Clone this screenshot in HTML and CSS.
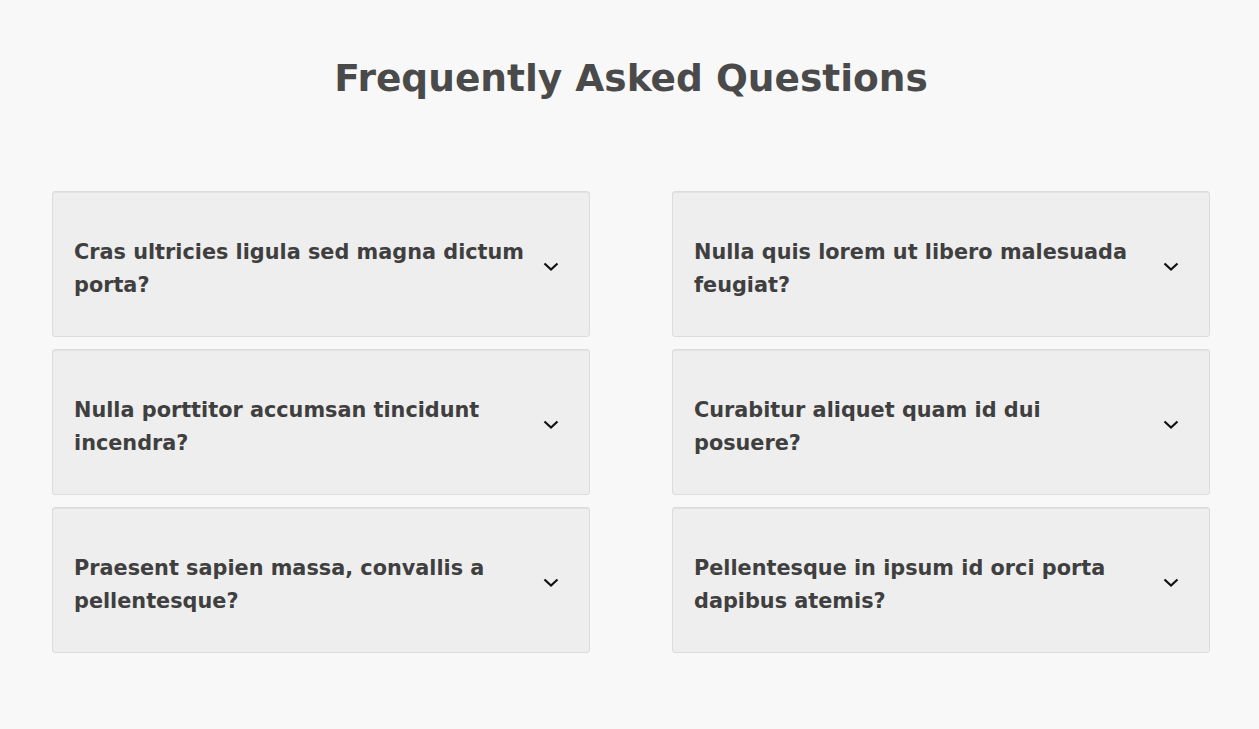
FILE: index.html
```html
<!DOCTYPE html>
<html lang="en">
<head>
    <meta charset="UTF-8">
    <meta name="viewport" content="width=device-width, initial-scale=1.0">
    <title>FAQ</title>
    <link rel="stylesheet" href="styles.css">
</head>
<body>
    <section class="faq">
        <h1>Frequently Asked Questions</h1>

        <div class="faq-grid">
            <div class="faq-column">
                <div class="faq-item">
                    <p class="question">Cras ultricies ligula sed magna dictum porta?</p>
                    <span class="chevron"><svg width="16" height="9" viewBox="0 0 16 9"><path d="M1.5 1.5 L8 7.5 L14.5 1.5" fill="none" stroke="#111" stroke-width="2.2"/></svg></span>
                </div>
                <div class="faq-item">
                    <p class="question">Nulla porttitor accumsan tincidunt incendra?</p>
                    <span class="chevron"><svg width="16" height="9" viewBox="0 0 16 9"><path d="M1.5 1.5 L8 7.5 L14.5 1.5" fill="none" stroke="#111" stroke-width="2.2"/></svg></span>
                </div>
                <div class="faq-item">
                    <p class="question">Praesent sapien massa, convallis a pellentesque?</p>
                    <span class="chevron"><svg width="16" height="9" viewBox="0 0 16 9"><path d="M1.5 1.5 L8 7.5 L14.5 1.5" fill="none" stroke="#111" stroke-width="2.2"/></svg></span>
                </div>
            </div>
            <div class="faq-column">
                <div class="faq-item">
                    <p class="question">Nulla quis lorem ut libero malesuada feugiat?</p>
                    <span class="chevron"><svg width="16" height="9" viewBox="0 0 16 9"><path d="M1.5 1.5 L8 7.5 L14.5 1.5" fill="none" stroke="#111" stroke-width="2.2"/></svg></span>
                </div>
                <div class="faq-item">
                    <p class="question">Curabitur aliquet quam id dui posuere?</p>
                    <span class="chevron"><svg width="16" height="9" viewBox="0 0 16 9"><path d="M1.5 1.5 L8 7.5 L14.5 1.5" fill="none" stroke="#111" stroke-width="2.2"/></svg></span>
                </div>
                <div class="faq-item">
                    <p class="question">Pellentesque in ipsum id orci porta dapibus atemis?</p>
                    <span class="chevron"><svg width="16" height="9" viewBox="0 0 16 9"><path d="M1.5 1.5 L8 7.5 L14.5 1.5" fill="none" stroke="#111" stroke-width="2.2"/></svg></span>
                </div>
            </div>
        </div>
    </section>
</body>
</html>
```

FILE: styles.css
```css
body {
    font-family: 'DejaVu Sans', 'Liberation Sans', sans-serif;
    background-color: #f8f8f8;
    margin: 0;
    color: #444;
}
.faq {
    width: 1158px;
    margin-left: 52px;
    padding-top: 50px;
}
h1 {
    margin: 0 0 85px;
    text-align: center;
    font-size: 37.5px;
    line-height: 56px;
    font-weight: 700;
    color: #4a4a4a;
}
.faq-grid {
    display: grid;
    grid-template-columns: 538px 538px;
    column-gap: 82px;
}
.faq-column {
    display: flex;
    flex-direction: column;
    gap: 12px;
}
.faq-item {
    display: flex;
    align-items: center;
    justify-content: space-between;
    height: 146px;
    box-sizing: border-box;
    padding: 0 30px 0 21px;
    background-color: #eeeeee;
    border: 1px solid #dcdcdc;
    border-radius: 3px;
    box-shadow: inset 0 1px 0 #e2e2e2;
}
.question {
    margin: 0;
    padding-top: 10px;
    max-width: 454px;
    font-size: 20.8px;
    line-height: 33px;
    font-weight: 700;
    color: #3f3f3f;
}
.chevron {
    display: flex;
    width: 16px;
    height: 9px;
    margin-top: 4px;
}
```
